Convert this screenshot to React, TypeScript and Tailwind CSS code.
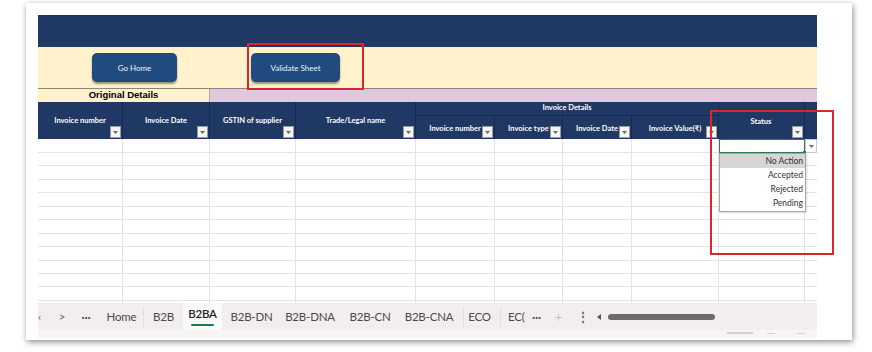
import React from "react";

const cols = "grid-cols-[85px_87px_86px_120px_79px_68px_69px_87px_86px_12px]";

function Filter() {
  return (
    <div className="absolute right-[1px] bottom-[1px] w-[11px] h-[12px] bg-[#f4f4f4] border border-[#9a9a9a] flex items-center justify-center">
      <svg width="5" height="3" viewBox="0 0 5 3">
        <path d="M0 0 L5 0 L2.5 3 Z" fill="#6b6b6b" />
      </svg>
    </div>
  );
}

function HCell({ text, className }: { text: string; className: string }) {
  return (
    <div className={`relative border-r border-[#142a52] flex items-center justify-center pt-[1px] ${className}`}>
      <span className="whitespace-nowrap">{text}</span>
      <Filter />
    </div>
  );
}

function SubCell({ text, className }: { text: string; className: string }) {
  return (
    <div className={`relative border-r border-[#142a52] flex items-center justify-center overflow-hidden pt-[2px] ${className}`}>
      <span className="whitespace-nowrap">{text}</span>
      <Filter />
    </div>
  );
}

export default function App() {
  const rows = Array.from({ length: 13 });
  return (
    <div
      className="w-[872px] h-[352px] bg-white overflow-hidden pt-[3px] pl-[26px]"
      style={{ fontFamily: "Lato, 'Noto Sans', sans-serif" }}
    >
      <div className="relative w-[826px] h-[337px] bg-white shadow-[1px_2px_6px_rgba(0,0,0,0.45)] pt-[12px] pl-[12px]">
        <div className="w-[779px] flex flex-col">
          {/* navy band */}
          <div className="h-[32px] bg-[#1f3864]" />
          {/* cream band with buttons */}
          <div className="h-[41px] bg-[#fff2cc] flex items-start pt-[6px] pl-[54px] gap-[74px]">
            <div className="w-[85px] h-[29px] rounded-[5px] bg-[#1f4b7e] shadow-[0_2px_2px_rgba(0,0,0,0.4)] flex items-center justify-center text-[8px] text-[#eef2f8]">
              Go Home
            </div>
            <div className="w-[89px] h-[29px] rounded-[5px] bg-[#1f4b7e] shadow-[0_2px_2px_rgba(0,0,0,0.4)] flex items-center justify-center text-[8px] text-[#eef2f8]">
              Validate Sheet
            </div>
          </div>
          <div className="h-[1px] bg-[#8a8577]" />
          {/* Original details row */}
          <div className="h-[13px] flex">
            <div
              className="w-[172px] bg-[#fff2cc] border-r border-[#a9a9a9] flex items-center justify-center text-[9.5px] font-bold text-black"
              style={{ fontFamily: "'Liberation Sans', Arial, sans-serif" }}
            >
              Original Details
            </div>
            <div className="flex-1 bg-[#dfc9de]" />
          </div>
          {/* header */}
          <div className={`grid ${cols} grid-rows-[14px_23px] h-[37px] bg-[#1f3864] text-white text-[7.5px] font-bold`}>
            <HCell text="Invoice number" className="col-start-1 row-start-1 row-span-2" />
            <HCell text="Invoice Date" className="col-start-2 row-start-1 row-span-2" />
            <HCell text="GSTIN of supplier" className="col-start-3 row-start-1 row-span-2" />
            <HCell text="Trade/Legal name" className="col-start-4 row-start-1 row-span-2" />
            <div className="col-start-5 col-span-4 row-start-1 border-r border-b border-[#142a52] flex items-center justify-center pb-[1px]">
              Invoice Details
            </div>
            <SubCell text="Invoice number" className="col-start-5 row-start-2" />
            <SubCell text="Invoice type" className="col-start-6 row-start-2" />
            <SubCell text="Invoice Date" className="col-start-7 row-start-2" />
            <SubCell text="Invoice Value(₹)" className="col-start-8 row-start-2" />
            <div className="col-start-9 row-start-1 row-span-2 relative border-r border-[#142a52] flex items-center justify-center pt-[2px]">
              <span>
                Status<span className="text-[#e04848] text-[6px] align-top">'</span>
              </span>
              <Filter />
            </div>
            <div className="col-start-10 row-start-1 row-span-2" />
          </div>
          {/* data rows */}
          <div className="h-[164px] overflow-hidden">
            {rows.map((_, r) => (
              <div key={r} className={`grid ${cols} ${r === 0 ? "h-[14px]" : "h-[13.45px]"}`}>
                {Array.from({ length: 10 }).map((__, c) => {
                  if (r === 0 && c === 8) {
                    return (
                      <div key={c} className="relative border border-[#2f7d4e]">
                        <div className="absolute right-[-2px] bottom-[-2px] w-[3px] h-[3px] bg-[#2f7d4e]" />
                      </div>
                    );
                  }
                  if (r === 0 && c === 9) {
                    return (
                      <div key={c} className="flex items-center justify-center border border-[#c8c8c8] bg-white">
                        <svg width="5" height="3" viewBox="0 0 5 3">
                          <path d="M0 0 L5 0 L2.5 3 Z" fill="#6b6b6b" />
                        </svg>
                      </div>
                    );
                  }
                  return <div key={c} className={`border-b border-[#e3e3e3] ${c < 9 ? "border-r" : ""}`} />;
                })}
              </div>
            ))}
          </div>
          {/* tab bar */}
          <div className="h-[27px] bg-[#f2eef0] flex items-center text-[11.5px] text-[#4a4a4a] tracking-[-0.2px]">
            <div className="w-[6px] overflow-hidden text-[#777]">‹</div>
            <div className="w-[8px]" />
            <div className="w-[20px] text-center text-[#666]">&gt;</div>
            <div className="w-[28px] text-center font-bold text-[#555] leading-none">···</div>
            <div className="w-[43px] text-center">Home</div>
            <div className="w-[1px] h-[20px] bg-[#e2dde0]" />
            <div className="w-[39px] text-center">B2B</div>
            <div className="w-[39px] h-[27px] bg-[#fbfafa] flex flex-col items-center justify-center">
              <span className="font-semibold text-[#222] leading-none mt-[1px]">B2BA</span>
              <div className="w-[23px] h-[2px] rounded bg-[#1f7a4a] mt-[4px]" />
            </div>
            <div className="w-[59px] text-center">B2B-DN</div>
            <div className="w-[58px] text-center">B2B-DNA</div>
            <div className="w-[62px] text-center">B2B-CN</div>
            <div className="w-[56px] text-center">B2B-CNA</div>
            <div className="w-[6px]" />
            <div className="w-[1px] h-[20px] bg-[#e2dde0]" />
            <div className="w-[31px] text-center">ECO</div>
            <div className="w-[5px]" />
            <div className="w-[1px] h-[20px] bg-[#e2dde0]" />
            <div className="w-[7px]" />
            <div className="w-[14px] whitespace-nowrap">EC(</div>
            <div className="w-[29px] text-center font-bold text-[#555]">···</div>
            <div className="w-[15px] text-center text-[#aaa] text-[14px] font-light">+</div>
            <div className="w-[6px]" />
            <div className="w-[22px] text-center text-[#666] font-bold">⋮</div>
            <div className="w-[9px] flex items-center justify-center">
              <svg width="4" height="6" viewBox="0 0 4 6">
                <path d="M4 0 L0 3 L4 6 Z" fill="#555" />
              </svg>
            </div>
            <div className="w-[5px]" />
            <div className="w-[107px] h-[6px] rounded-full bg-[#6b6b6b]" />
          </div>
          <div className="h-[8px] bg-[#f7f4f5] flex items-start">
            <div className="ml-[689px] mt-[2px] w-[26px] h-[2px] bg-[#d3d0d1]" />
            <div className="ml-[14px] mt-[3px] w-[8px] h-[1px] bg-[#d3d0d1]" />
            <div className="ml-[22px] mt-[3px] w-[8px] h-[1px] bg-[#d3d0d1]" />
          </div>
        </div>

        {/* dropdown list */}
        <div className="absolute left-[693px] top-[150px] w-[87px] h-[59px] bg-white border border-[#a6a6a6] text-[8.5px] text-[#333] shadow-[1px_1px_2px_rgba(0,0,0,0.15)]">
          <div className="h-[14px] bg-[#d6d6d6] flex items-center justify-end pr-[2px]">No Action</div>
          <div className="h-[14px] flex items-center justify-end pr-[2px]">Accepted</div>
          <div className="h-[14px] flex items-center justify-end pr-[2px]">Rejected</div>
          <div className="h-[14px] flex items-center justify-end pr-[2px]">Pending</div>
        </div>

        {/* annotation rectangles */}
        <div className="absolute left-[221px] top-[40px] w-[117px] h-[47px] border-2 border-[#d9262c]" />
        <div className="absolute left-[684px] top-[107px] w-[124px] h-[145px] border-2 border-[#d9262c]" />
      </div>
    </div>
  );
}
